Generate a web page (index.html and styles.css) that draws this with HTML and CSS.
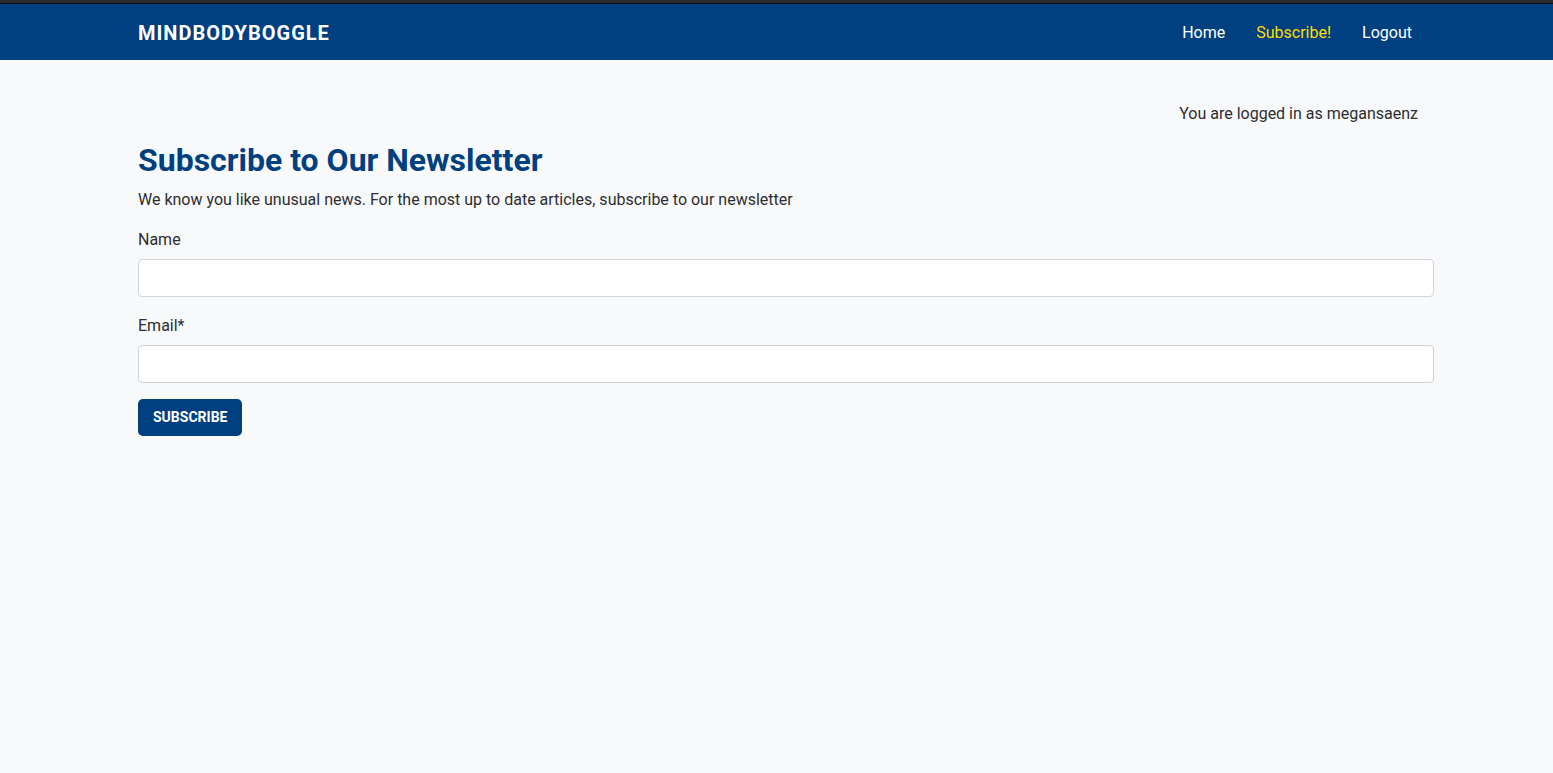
FILE: index.html
```html
<!DOCTYPE html>
<html lang="en">
<head>
<meta charset="utf-8">
<meta name="viewport" content="width=device-width, initial-scale=1">
<title>MindBodyBoggle</title>
<link rel="stylesheet" href="styles.css">
</head>
<body>
<header class="site-header">
  <nav class="container nav-bar" aria-label="Main">
    <a class="brand" href="#">MINDBODYBOGGLE</a>
    <ul class="nav-links">
      <li><a class="nav-link" href="#">Home</a></li>
      <li><a class="nav-link nav-link-active" href="#" aria-current="page">Subscribe!</a></li>
      <li><a class="nav-link" href="#">Logout</a></li>
    </ul>
  </nav>
</header>
<main class="page">
  <div class="container">
    <p class="user-status">You are logged in as megansaenz</p>
    <h1 class="title">Subscribe to Our Newsletter</h1>
    <p class="intro">We know you like unusual news. For the most up to date articles, subscribe to our newsletter</p>
    <form class="form">
      <div class="field">
        <label class="label" for="name">Name</label>
        <input class="input" type="text" id="name" name="name">
      </div>
      <div class="field">
        <label class="label" for="email">Email*</label>
        <input class="input" type="email" id="email" name="email" required>
      </div>
      <button class="button" type="submit">SUBSCRIBE</button>
    </form>
  </div>
</main>
</body>
</html>
```
FILE: styles.css
```css
*, *::before, *::after { box-sizing: border-box; }

body {
  margin: 0;
  background: #f8f9fb;
  color: #2c2d31;
  font-family: Roboto, sans-serif;
  font-size: 16px;
  line-height: 24px;
}

.container {
  max-width: 1320px;
  margin: 0 auto;
  padding: 0 12px;
}

.site-header {
  padding-left: 19px;
  border-top: 3px solid #2b2a33;
  background: #004080;
  box-shadow: inset 0 1px #0c0c0d;
}

.nav-bar {
  display: flex;
  align-items: center;
  justify-content: space-between;
  padding-top: 10px;
  padding-bottom: 7px;
}

.brand {
  color: #fff;
  font-size: 20px;
  font-weight: 700;
  letter-spacing: 1px;
  text-decoration: none;
}

.nav-links {
  display: flex;
  gap: 15px;
  margin: 0;
  padding: 0 14px 0 0;
  list-style: none;
}

.nav-link {
  display: block;
  padding: 8px;
  color: #fff;
  text-decoration: none;
}

.nav-link-active { color: #ffdf00; }

.page { padding: 42px 0 24px 19px; }

.user-status {
  margin: 0 16px 15px 0;
  text-align: right;
}

.title {
  margin: 0 0 9px;
  color: #004080;
  font-size: 32px;
  font-weight: 700;
  line-height: 38px;
}

.intro { margin: 0 0 15px; }

.field { margin-bottom: 16px; }

.label {
  display: block;
  padding-top: 1px;
  margin-bottom: 7px;
}

.input {
  display: block;
  width: 100%;
  height: 38px;
  padding: 6px 12px;
  border: 1px solid #ced4da;
  border-radius: 4px;
  background: #fff;
  font: inherit;
}

.button {
  padding: 8px 15px;
  border: 0;
  border-radius: 5px;
  background: #004080;
  color: #fff;
  font-family: inherit;
  font-size: 14px;
  font-weight: 700;
  line-height: 21px;
}
```
